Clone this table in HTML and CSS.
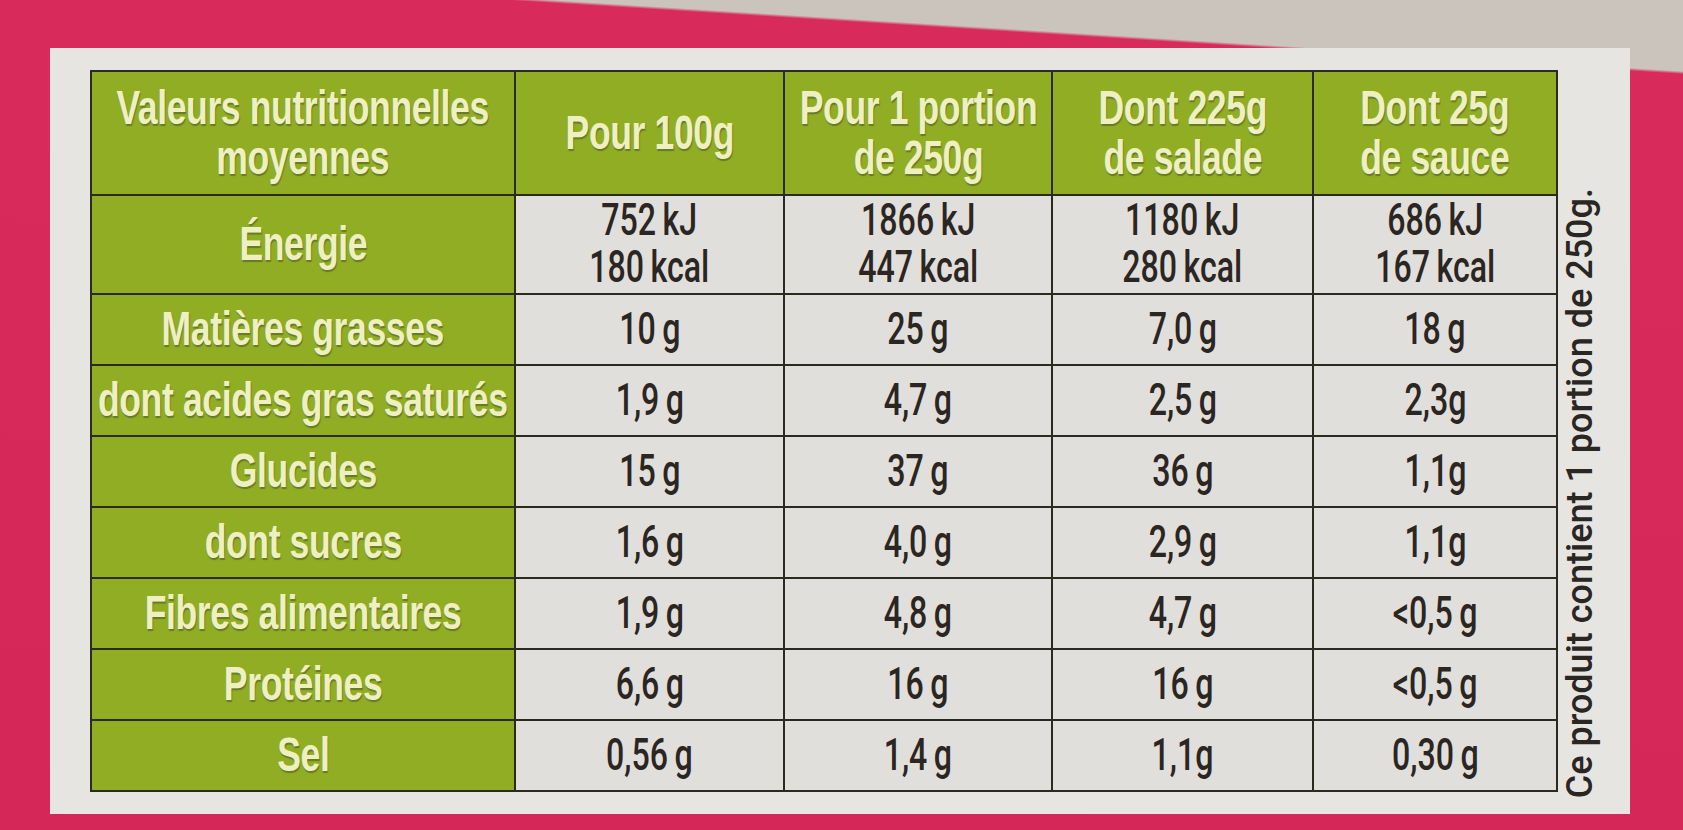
FILE: index.html
```html
<!DOCTYPE html>
<html lang="fr">
<head>
<meta charset="utf-8">
<title>Valeurs nutritionnelles</title>
<link rel="stylesheet" href="styles.css">
</head>
<body>
<div class="card">
  <div class="nt">
    <div class="c g"><span class="lab">Valeurs nutritionnelles<br>moyennes</span></div>
    <div class="c g"><span class="lab">Pour 100g</span></div>
    <div class="c g"><span class="lab">Pour 1 portion<br>de 250g</span></div>
    <div class="c g"><span class="lab">Dont 225g<br>de salade</span></div>
    <div class="c g"><span class="lab">Dont 25g<br>de sauce</span></div>

    <div class="c g"><span class="lab">Énergie</span></div>
    <div class="c"><span class="val">752 kJ<br>180 kcal</span></div>
    <div class="c"><span class="val">1866 kJ<br>447 kcal</span></div>
    <div class="c"><span class="val">1180 kJ<br>280 kcal</span></div>
    <div class="c"><span class="val">686 kJ<br>167 kcal</span></div>

    <div class="c g"><span class="lab">Matières grasses</span></div>
    <div class="c"><span class="val">10 g</span></div>
    <div class="c"><span class="val">25 g</span></div>
    <div class="c"><span class="val">7,0 g</span></div>
    <div class="c"><span class="val">18 g</span></div>

    <div class="c g"><span class="lab">dont acides gras saturés</span></div>
    <div class="c"><span class="val">1,9 g</span></div>
    <div class="c"><span class="val">4,7 g</span></div>
    <div class="c"><span class="val">2,5 g</span></div>
    <div class="c"><span class="val">2,3g</span></div>

    <div class="c g"><span class="lab">Glucides</span></div>
    <div class="c"><span class="val">15 g</span></div>
    <div class="c"><span class="val">37 g</span></div>
    <div class="c"><span class="val">36 g</span></div>
    <div class="c"><span class="val">1,1g</span></div>

    <div class="c g"><span class="lab">dont sucres</span></div>
    <div class="c"><span class="val">1,6 g</span></div>
    <div class="c"><span class="val">4,0 g</span></div>
    <div class="c"><span class="val">2,9 g</span></div>
    <div class="c"><span class="val">1,1g</span></div>

    <div class="c g"><span class="lab">Fibres alimentaires</span></div>
    <div class="c"><span class="val">1,9 g</span></div>
    <div class="c"><span class="val">4,8 g</span></div>
    <div class="c"><span class="val">4,7 g</span></div>
    <div class="c"><span class="val">&lt;0,5 g</span></div>

    <div class="c g"><span class="lab">Protéines</span></div>
    <div class="c"><span class="val">6,6 g</span></div>
    <div class="c"><span class="val">16 g</span></div>
    <div class="c"><span class="val">16 g</span></div>
    <div class="c"><span class="val">&lt;0,5 g</span></div>

    <div class="c g"><span class="lab">Sel</span></div>
    <div class="c"><span class="val">0,56 g</span></div>
    <div class="c"><span class="val">1,4 g</span></div>
    <div class="c"><span class="val">1,1g</span></div>
    <div class="c"><span class="val">0,30 g</span></div>
  </div>
  <div class="side"><span class="side-txt">Ce produit contient 1 portion de 250g.</span></div>
</div>
</body>
</html>
```

FILE: styles.css
```css
html, body {
  margin: 0;
  padding: 0;
}
body {
  width: 1683px;
  height: 830px;
  overflow: hidden;
  background: linear-gradient(183.6deg, #cbc4bc 0, #cbc4bc 71px, #d82a5b 74px, #d52858 100%);
  font-family: "Liberation Sans", Arial, sans-serif;
}
.card {
  margin: 48px 0 0 50px;
  width: 1580px;
  height: 766px;
  box-sizing: border-box;
  padding: 22px 30px 22px 40px;
  background: #e7e5e2;
  display: flex;
  align-items: stretch;
  gap: 2px;
}
.nt {
  width: 1472px;
  display: grid;
  grid-template-columns: 426fr 270fr 268fr 262fr 244fr;
  grid-template-rows: 125fr 100fr 71fr 71fr 71fr 71fr 71fr 71fr 71fr;
  gap: 2px;
  background: #2b2a1f;
  border: 2px solid #2b2a1f;
}
.c {
  background: #e1dfdc;
  display: flex;
  align-items: center;
  justify-content: center;
  min-width: 0;
  overflow: visible;
}
.c.g {
  background: #90ad24;
}
.lab {
  display: inline-block;
  white-space: nowrap;
  text-align: center;
  font-family: "Liberation Sans", Arial, sans-serif;
  font-weight: 700;
  font-size: 48px;
  line-height: 50px;
  letter-spacing: -0.5px;
  color: #eef0c2;
  text-shadow: 1px 2px 1px rgba(70, 80, 40, 0.55);
  transform: scaleX(0.74);
}
.val {
  display: inline-block;
  white-space: nowrap;
  text-align: center;
  font-family: Roboto, "Liberation Sans", sans-serif;
  font-weight: 500;
  font-size: 44px;
  line-height: 47px;
  word-spacing: -2px;
  color: #2b2621;
  transform: scaleX(0.73);
}
.side {
  display: flex;
  align-items: flex-end;
  width: 40px;
}
.side-txt {
  writing-mode: vertical-rl;
  transform: rotate(180deg);
  font-family: Roboto, "Liberation Sans", sans-serif;
  font-weight: 500;
  font-size: 36px;
  line-height: 40px;
  color: #2a2622;
  white-space: nowrap;
  margin-bottom: -6px;
}
```
